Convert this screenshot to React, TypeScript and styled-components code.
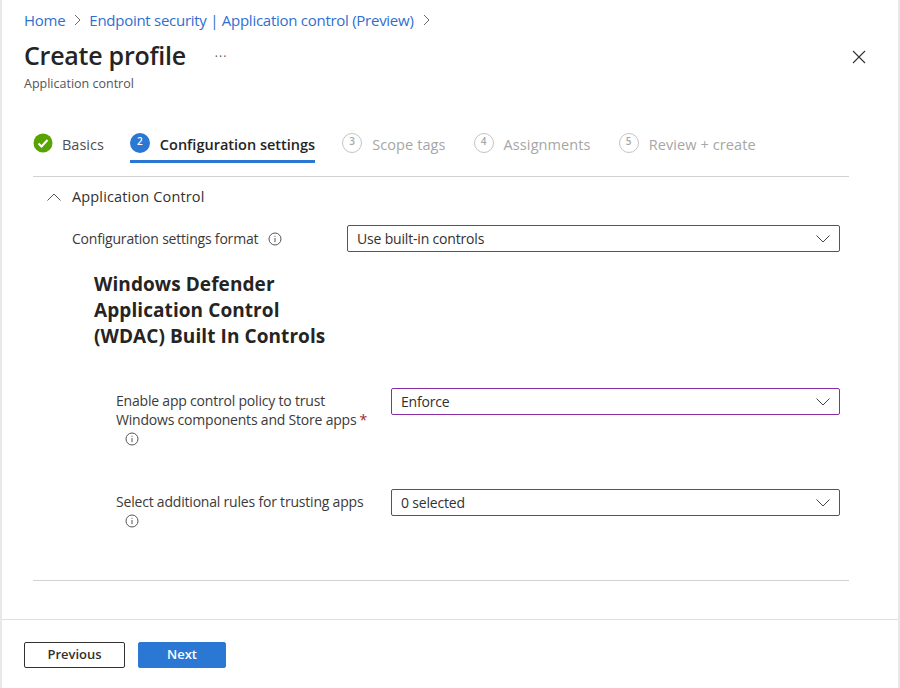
import React from 'react';
import styled, { createGlobalStyle } from 'styled-components';

const GlobalStyle = createGlobalStyle`
  html, body {
    margin: 0;
    height: 100%;
    background: #fff;
  }
  body {
    font-family: 'Open Sans', 'Noto Sans', sans-serif;
    color: #323130;
    overflow: hidden;
  }
`;

const Blade = styled.div`
  box-sizing: border-box;
  width: 900px;
  height: 688px;
  border-left: 2px solid #e8e8e8;
  border-right: 2px solid #e8e8e8;
  display: flex;
  flex-direction: column;
`;

const Header = styled.header`
  padding: 10px 22px 0;
  position: relative;
`;

const Crumbs = styled.nav`
  display: flex;
  align-items: center;
  height: 19px;
  font-size: 15px;
  letter-spacing: -0.27px;
  color: #2f6fd0;
`;

const Crumb = styled.span`
  white-space: nowrap;
`;

const CrumbChevron = styled.svg`
  width: 8px;
  height: 12px;
  margin: 0 7px 0 9px;
  fill: none;
  stroke: #6a6a6a;
  stroke-width: 1;
`;

const TitleRow = styled.div`
  display: flex;
  align-items: center;
  margin-top: 9px;
  height: 34px;
`;

const Title = styled.h1`
  margin: 0;
  font-size: 25px;
  font-weight: 600;
  letter-spacing: -0.25px;
  color: #252423;
`;

const More = styled.span`
  margin-left: 29px;
  font-size: 12px;
  line-height: 12px;
  letter-spacing: 1px;
  color: #555;
  position: relative;
  top: 2px;
`;

const Subtitle = styled.div`
  font-size: 12.5px;
  line-height: 16px;
  margin-top: 4px;
  color: #555;
`;

const CloseButton = styled.svg`
  position: absolute;
  top: 50px;
  right: 32px;
  width: 14px;
  height: 14px;
  stroke: #323130;
  stroke-width: 1.1;
  fill: none;
`;

const Content = styled.main`
  flex: 1;
  margin: 0 49px 0 31px;
  padding-top: 41px;
`;

const Steps = styled.div`
  display: flex;
  height: 43px;
  border-bottom: 1px solid #d2d2d2;
`;

const Step = styled.div<{ $state: 'done' | 'active' | 'todo'; $gap: number }>`
  display: flex;
  align-items: flex-start;
  gap: ${(p) => (p.$state === 'done' ? 9 : 10)}px;
  height: 27px;
  margin-right: ${(p) => p.$gap}px;
  font-size: 14.5px;
  line-height: 19px;
  white-space: nowrap;
  letter-spacing: ${(p) => (p.$state === 'todo' ? 0.1 : 0)}px;
  color: ${(p) => (p.$state === 'active' ? '#252423' : p.$state === 'done' ? '#4f4f4f' : '#a6a6a6')};
  font-weight: ${(p) => (p.$state === 'active' ? 600 : 400)};
  border-bottom: 3px solid ${(p) => (p.$state === 'active' ? '#2b78d4' : 'transparent')};
`;

const StepLabel = styled.span`
  padding-top: 2px;
`;

const StepBadge = styled.span<{ $active?: boolean }>`
  box-sizing: border-box;
  width: 20px;
  height: 20px;
  border-radius: 50%;
  display: flex;
  align-items: center;
  justify-content: center;
  font-size: 10px;
  font-weight: 600;
  padding-bottom: 3px;
  color: ${(p) => (p.$active ? '#fff' : '#a6a6a6')};
  background: ${(p) => (p.$active ? '#2b78d4' : 'transparent')};
  border: ${(p) => (p.$active ? 'none' : '1px solid #c4c4c4')};
`;

const CheckBadge = styled.svg`
  width: 20px;
  height: 20px;
`;

const SectionHeader = styled.div`
  display: flex;
  align-items: center;
  height: 19px;
  margin-top: 10px;
  padding-left: 14px;
  font-size: 14.5px;
  letter-spacing: 0.15px;
  color: #323130;
`;

const SectionChevron = styled.svg`
  width: 14px;
  height: 8px;
  margin-right: 11px;
  fill: none;
  stroke: #555;
  stroke-width: 1;
`;

const FormRow = styled.div<{ $indent: number; $field: number; $top: number; $height: number }>`
  display: grid;
  grid-template-columns: 275px ${(p) => p.$field}px;
  margin-top: ${(p) => p.$top}px;
  margin-left: ${(p) => p.$indent}px;
  height: ${(p) => p.$height}px;
`;

const FieldLabel = styled.label<{ $drop?: number }>`
  font-size: 14px;
  line-height: 19px;
  letter-spacing: -0.2px;
  color: #3b3a39;
  padding: ${(p) => p.$drop ?? 3}px 15px 0 0;
`;

const Required = styled.span`
  color: #a4262c;
  margin-left: 3px;
`;

const Info = styled.svg<{ $inline?: boolean }>`
  width: 14px;
  height: 14px;
  fill: none;
  stroke: #555;
  vertical-align: -2px;
  margin: ${(p) => (p.$inline ? '0 0 0 10px' : '3px 0 0 9px')};
  display: ${(p) => (p.$inline ? 'inline-block' : 'block')};
`;

const Select = styled.div`
  box-sizing: border-box;
  height: 27px;
  border: 1px solid #8a2da5;
  border-radius: 2px;
  display: flex;
  align-items: center;
  justify-content: space-between;
  padding: 0 9px 0 9px;
  font-size: 14px;
  letter-spacing: -0.18px;
  color: #323130;
`;

const SelectChevron = styled.svg`
  width: 14px;
  height: 8px;
  fill: none;
  stroke: #444;
  stroke-width: 1;
`;

const Heading = styled.h2`
  margin: 19px 0 0 61px;
  width: 240px;
  font-size: 19px;
  line-height: 26px;
  font-weight: 700;
  letter-spacing: 0.08px;
  color: #252423;
`;

const Divider = styled.hr`
  border: 0;
  height: 1px;
  background: #d2d2d2;
  margin: 51px 0 0;
`;

const Footer = styled.footer`
  box-sizing: border-box;
  height: 69px;
  border-top: 1px solid #e0e0e0;
  padding: 22px 22px 0;
  display: flex;
  gap: 13px;
  align-items: flex-start;
`;

const Button = styled.button<{ $primary?: boolean }>`
  box-sizing: border-box;
  height: 26px;
  width: ${(p) => (p.$primary ? 88 : 101)}px;
  border-radius: 2px;
  font-family: inherit;
  font-size: 13px;
  font-weight: 600;
  padding: 0 0 2px;
  color: ${(p) => (p.$primary ? '#fff' : '#323130')};
  background: ${(p) => (p.$primary ? '#2b78d4' : '#fff')};
  border: 1px solid ${(p) => (p.$primary ? '#2b78d4' : '#323130')};
`;

const InfoIcon = ({ inline }: { inline?: boolean }) => (
  <Info $inline={inline} viewBox="0 0 14 14">
    <circle cx="7" cy="7" r="6" />
    <path d="M7 6v4.2M7 3.8v1" />
  </Info>
);

const Chevron = () => (
  <SelectChevron viewBox="0 0 14 8">
    <path d="M0.5 0.5 7 7l6.5-6.5" />
  </SelectChevron>
);

const CrumbArrow = () => (
  <CrumbChevron viewBox="0 0 8 12">
    <path d="M1 1l5 5-5 5" />
  </CrumbChevron>
);

const App: React.FC = () => (
  <>
    <GlobalStyle />
    <Blade>
      <Header>
        <Crumbs>
          <Crumb>Home</Crumb>
          <CrumbArrow />
          <Crumb>Endpoint security | Application control (Preview)</Crumb>
          <CrumbArrow />
        </Crumbs>
        <TitleRow>
          <Title>Create profile</Title>
          <More>···</More>
        </TitleRow>
        <Subtitle>Application control</Subtitle>
        <CloseButton viewBox="0 0 14 14">
          <path d="M1 1l12 12M13 1L1 13" />
        </CloseButton>
      </Header>
      <Content>
        <Steps>
          <Step $state="done" $gap={26}>
            <CheckBadge viewBox="0 0 20 20">
              <circle cx="10" cy="10" r="9.5" fill="#57a300" />
              <path d="M5.5 10.5l3 3 6-6.5" fill="none" stroke="#fff" strokeWidth="2" />
            </CheckBadge>
            <StepLabel>Basics</StepLabel>
          </Step>
          <Step $state="active" $gap={27}>
            <StepBadge $active>2</StepBadge>
            <StepLabel>Configuration settings</StepLabel>
          </Step>
          <Step $state="todo" $gap={28}>
            <StepBadge>3</StepBadge>
            <StepLabel>Scope tags</StepLabel>
          </Step>
          <Step $state="todo" $gap={28}>
            <StepBadge>4</StepBadge>
            <StepLabel>Assignments</StepLabel>
          </Step>
          <Step $state="todo" $gap={0}>
            <StepBadge>5</StepBadge>
            <StepLabel>Review + create</StepLabel>
          </Step>
        </Steps>
        <SectionHeader>
          <SectionChevron viewBox="0 0 14 8">
            <path d="M0.5 7.5 7 1l6.5 6.5" />
          </SectionChevron>
          Application Control
        </SectionHeader>
        <FormRow $indent={39} $field={493} $top={19} $height={27}>
          <FieldLabel $drop={4}>
            Configuration settings format
            <InfoIcon inline />
          </FieldLabel>
          <Select>
            Use built-in controls
            <Chevron />
          </Select>
        </FormRow>
        <Heading>Windows Defender Application Control (WDAC) Built In Controls</Heading>
        <FormRow $indent={83} $field={449} $top={39} $height={62}>
          <FieldLabel>
            Enable app control policy to trust Windows components and Store apps
            <Required>*</Required>
            <InfoIcon />
          </FieldLabel>
          <Select>
            Enforce
            <Chevron />
          </Select>
        </FormRow>
        <FormRow $indent={83} $field={449} $top={39} $height={40}>
          <FieldLabel>
            Select additional rules for trusting apps
            <InfoIcon />
          </FieldLabel>
          <Select>
            0 selected
            <Chevron />
          </Select>
        </FormRow>
        <Divider />
      </Content>
      <Footer>
        <Button>Previous</Button>
        <Button $primary>Next</Button>
      </Footer>
    </Blade>
  </>
);

export default App;
